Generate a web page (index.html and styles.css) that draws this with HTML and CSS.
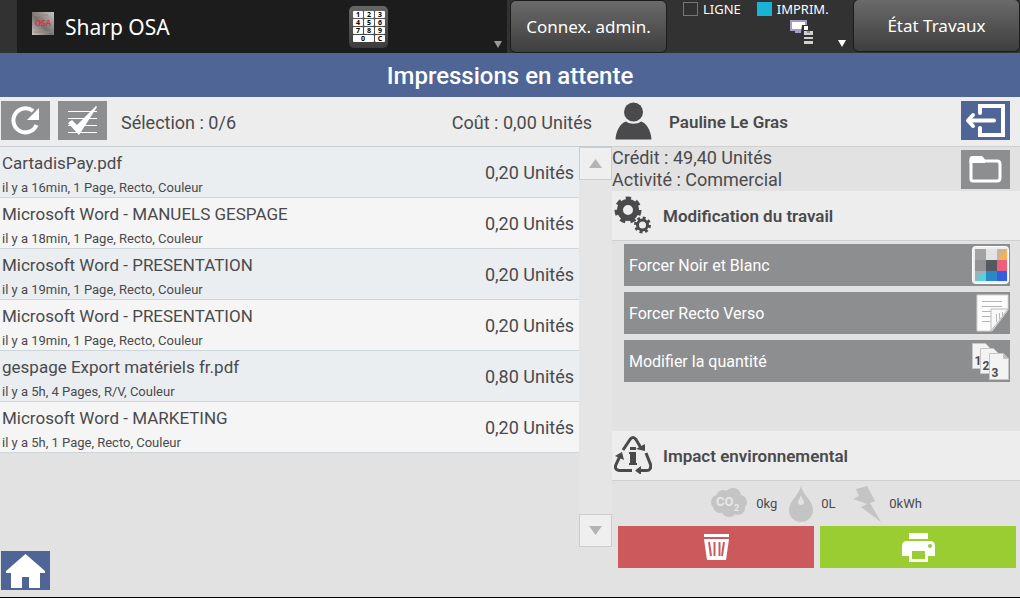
FILE: index.html
```html
<!DOCTYPE html>
<html lang="fr">
<head>
  <meta charset="UTF-8">
  <meta name="viewport" content="width=device-width, initial-scale=1">
  <title>Impressions en attente</title>
  <link rel="stylesheet" href="styles.css">
</head>
<body>

  <!-- BARRE SYSTEME -->
  <header class="system">
    <div class="app">
      <svg class="app-logo" width="22" height="23" viewBox="0 0 22 23" aria-hidden="true">
        <defs>
          <linearGradient id="metal" x1="0" y1="1" x2="1" y2="0">
            <stop offset="0" stop-color="#c8c4c0"/>
            <stop offset=".45" stop-color="#77716e"/>
            <stop offset="1" stop-color="#c9c5c2"/>
          </linearGradient>
        </defs>
        <rect width="22" height="23" fill="url(#metal)"/>
        <path d="M2 3h14M2 20h18" stroke="#8d8986"/>
        <text x="11" y="14" class="osa">OSA</text>
      </svg>
      <span class="app-name">Sharp OSA</span>
      <button class="keypad" aria-label="Clavier">
        <svg width="32" height="31" viewBox="0 0 32 31">
          <g fill="#fff">
            <rect x="0" y="0" width="10" height="7" rx="1"/><rect x="11" y="0" width="10" height="7" rx="1"/><rect x="22" y="0" width="10" height="7" rx="1"/>
            <rect x="0" y="8" width="10" height="7" rx="1"/><rect x="11" y="8" width="10" height="7" rx="1"/><rect x="22" y="8" width="10" height="7" rx="1"/>
            <rect x="0" y="16" width="10" height="7" rx="1"/><rect x="11" y="16" width="10" height="7" rx="1"/><rect x="22" y="16" width="10" height="7" rx="1"/>
            <rect x="0" y="24" width="21" height="7" rx="1"/><rect x="22" y="24" width="10" height="7" rx="1"/>
          </g>
          <g class="keys">
            <text x="5" y="6">1</text><text x="16" y="6">2</text><text x="27" y="6">3</text>
            <text x="5" y="14">4</text><text x="16" y="14">5</text><text x="27" y="14">6</text>
            <text x="5" y="22">7</text><text x="16" y="22">8</text><text x="27" y="22">9</text>
            <text x="10" y="30">0</text><text x="27" y="30">C</text>
          </g>
        </svg>
      </button>
      <svg class="caret" width="8" height="7" viewBox="0 0 8 7" aria-hidden="true"><path d="M0 0h8L4 7z" fill="#999"/></svg>
    </div>
    <button class="sys-btn admin">Connex. admin.</button>
    <div class="status">
      <div class="leds">
        <span class="led"></span><span>LIGNE</span>
        <span class="led on"></span><span>IMPRIM.</span>
      </div>
      <div class="status-icons">
        <svg width="24" height="24" viewBox="0 0 24 24" aria-hidden="true">
          <path d="M1 1h15v9H1z" fill="#fff" stroke="#a99bc9" stroke-width="2"/>
          <path d="M5 12h6" stroke="#a99bc9" stroke-width="2"/>
          <path d="M12 5h6l5 4v15h-10V12h-2z" fill="#333"/>
          <path d="M14 6h4v4h-4z" fill="#fff"/>
          <path d="M14 11h9v4h-9zM14 17h9v2h-9zM14 21h9v3h-9z" fill="#d0d0d0"/>
          <path d="M17 12h3" stroke="#555"/>
        </svg>
        <svg class="caret" width="8" height="7" viewBox="0 0 8 7" aria-hidden="true"><path d="M0 0h8L4 7z" fill="#fff"/></svg>
      </div>
    </div>
    <button class="sys-btn jobs-state">État Travaux</button>
  </header>

  <h1 class="title">Impressions en attente</h1>

  <main class="main">

    <!-- LISTE DES TRAVAUX -->
    <section class="left">
      <div class="toolbar">
        <button class="icon-btn grey" aria-label="Actualiser">
          <svg width="49" height="39" viewBox="0 0 49 39">
            <path d="M35.500 24A12 12 0 1 1 32 10" fill="none" stroke="#fff" stroke-width="4"/>
            <path d="M38 7v12H26z" fill="#fff"/>
          </svg>
        </button>
        <button class="icon-btn grey" aria-label="Tout sélectionner">
          <svg width="49" height="39" viewBox="0 0 49 39">
            <path d="M10 10.500h29M10 17.500h29M10 24.500h29M10 31.500h29" stroke="#fff"/>
            <path d="M10 22l4-3 5 5L38 5l1 1-18 28z" fill="#fff"/>
          </svg>
        </button>
        <span class="selection">Sélection : 0/6</span>
        <span class="cost">Coût : 0,00 Unités</span>
      </div>

      <div class="list-area">
        <ul class="jobs">
          <li><button class="job"><span class="doc"><span class="name">CartadisPay.pdf</span><span class="info">il y a 16min, 1 Page, Recto, Couleur</span></span><span class="price">0,20 Unités</span></button></li>
          <li><button class="job"><span class="doc"><span class="name">Microsoft Word - MANUELS GESPAGE</span><span class="info">il y a 18min, 1 Page, Recto, Couleur</span></span><span class="price">0,20 Unités</span></button></li>
          <li><button class="job"><span class="doc"><span class="name">Microsoft Word - PRESENTATION</span><span class="info">il y a 19min, 1 Page, Recto, Couleur</span></span><span class="price">0,20 Unités</span></button></li>
          <li><button class="job"><span class="doc"><span class="name">Microsoft Word - PRESENTATION</span><span class="info">il y a 19min, 1 Page, Recto, Couleur</span></span><span class="price">0,20 Unités</span></button></li>
          <li><button class="job"><span class="doc"><span class="name">gespage Export matériels fr.pdf</span><span class="info">il y a 5h, 4 Pages, R/V, Couleur</span></span><span class="price">0,80 Unités</span></button></li>
          <li><button class="job"><span class="doc"><span class="name">Microsoft Word - MARKETING</span><span class="info">il y a 5h, 1 Page, Recto, Couleur</span></span><span class="price">0,20 Unités</span></button></li>
        </ul>
        <div class="scroller">
          <button aria-label="Défiler vers le haut"><svg width="13" height="9" viewBox="0 0 13 9"><path d="M0 9h13L6.500 0z" fill="#b4b4b4"/></svg></button>
          <button aria-label="Défiler vers le bas"><svg width="13" height="9" viewBox="0 0 13 9"><path d="M0 0h13L6.500 9z" fill="#b4b4b4"/></svg></button>
        </div>
      </div>

      <div class="footer">
        <button class="icon-btn blue" aria-label="Accueil">
          <svg width="49" height="39" viewBox="0 0 49 39">
            <path d="M24.500 3L44 20v2h-5v15H28V26h-7v11H10V22H5v-2z" fill="#fff"/>
          </svg>
        </button>
      </div>
    </section>

    <!-- UTILISATEUR ET ACTIONS -->
    <section class="right">
      <div class="head user">
        <svg width="37" height="38" viewBox="0 0 37 38" aria-hidden="true">
          <circle cx="18.500" cy="10" r="9.500" fill="#4a4a4c"/>
          <path d="M0.500 37.500C1 28 6 21 11 19.500c4 3 11 3 15 0C31 21 36 28 36.500 37.500z" fill="#4a4a4c"/>
        </svg>
        <h2>Pauline Le Gras</h2>
        <button class="icon-btn blue" aria-label="Déconnexion">
          <svg width="49" height="39" viewBox="0 0 49 39" fill="none" stroke="#fff" stroke-width="4">
            <path d="M19 12V5h23v29H19v-7" stroke-linecap="round"/>
            <path d="M33 19.500H8" stroke-linecap="round"/>
            <path d="M12 14l-5 5.500 5 5.500" stroke-linecap="round" stroke-linejoin="round"/>
          </svg>
        </button>
      </div>

      <div class="account">
        <p>Crédit : 49,40 Unités<br>Activité : Commercial</p>
        <button class="icon-btn grey" aria-label="Changer d'activité">
          <svg width="49" height="39" viewBox="0 0 49 39">
            <path d="M10 29V11h26q3 0 3 3v14q0 3-3 3H12q-2 0-2-2z" fill="none" stroke="#fff" stroke-width="3"/>
            <path d="M8.500 13V9q0-3 3-3H20q2 0 4 4v3z" fill="#fff"/>
          </svg>
        </button>
      </div>

      <div class="head">
        <svg width="38" height="38" viewBox="0 0 38 38" aria-hidden="true" fill="none" stroke="#4a4a4c">
          <circle cx="14" cy="14" r="8" stroke-width="6"/>
          <circle cx="14" cy="14" r="11.500" stroke-width="4" stroke-dasharray="5.200 5.123"/>
          <circle cx="28.500" cy="29" r="5" stroke-width="3"/>
          <circle cx="28.500" cy="29" r="7" stroke-width="3" stroke-dasharray="2.800 2.698"/>
        </svg>
        <h2>Modification du travail</h2>
      </div>

      <div class="options">
        <button class="option">Forcer Noir et Blanc
          <svg width="39" height="40" viewBox="0 0 39 40">
            <rect x="1.500" y="1.500" width="36" height="37" rx="3" fill="#eee" stroke="#fff"/>
            <path d="M4 4h11v11H4z" fill="#a3a3a3"/><path d="M15 4h11v11H15z" fill="#e3e3e3"/><path d="M26 4h10v11H26z" fill="#d0b294"/><path d="M36 4v11h-9z" fill="#f0b552"/>
            <path d="M4 15h11v11H4z" fill="#929292"/><path d="M15 15h11v11H15z" fill="#555960"/><path d="M26 15h10v11H26z" fill="#ed5f7c"/>
            <path d="M4 26h11v10H4z" fill="#91b8bd"/><path d="M15 26v10H5z" fill="#57d0df"/><path d="M15 26h11v10H15z" fill="#2c89c5"/><path d="M26 26h10v10H26z" fill="#355fe0"/>
          </svg>
        </button>
        <button class="option">Forcer Recto Verso
          <svg width="39" height="40" viewBox="0 0 39 40">
            <path d="M6 2h31v15L21 38H6z" fill="#fcfcfc" stroke="#d6d6d6"/>
            <path d="M11 8.500h20M11 13.500h20M11 18.500h9M11 23.500h9M11 28.500h8" stroke="#b5b5b5"/>
            <path d="M20 38V16h17z" fill="#f8f8f8" stroke="#bbb"/>
            <path d="M25.500 21v8M28.500 20v6M31.500 19v4" stroke="#bbb"/>
          </svg>
        </button>
        <button class="option">Modifier la quantité
          <svg width="39" height="40" viewBox="0 0 39 40">
            <g fill="#f3f3f3" stroke="#c6c6c6">
              <path d="M1.500 2.500h13l5 5v20h-18z"/>
              <path d="M9.500 7.500h13l5 5v20h-18z"/>
              <path d="M18.500 12.500h14l5 5v21h-19z"/>
              <path d="M32.500 12.500v5h5" fill="#bbb"/>
            </g>
            <g class="pages"><text x="7" y="24">1</text><text x="15" y="29">2</text><text x="24" y="36">3</text></g>
          </svg>
        </button>
      </div>

      <div class="head">
        <svg width="38" height="38" viewBox="0 0 38 38" aria-hidden="true">
          <g fill="none" stroke="#4a4a4c" stroke-width="3">
            <path d="M9 14l7-10.500q3-4 6 0L27 12"/>
            <path d="M32 17l4.500 11.500q1 6-4 6H25"/>
            <path d="M18 34.500H5q-5-1-3-6L6 20"/>
          </g>
          <path d="M31 8v7l-9-2zM27 30v9l-6-4.500zM1 20l7-4 2 8z" fill="#4a4a4c"/>
          <path d="M16 11h6v3h-6zM15 16h7v11h1v2h-8v-2h1v-9h-1z" fill="#4a4a4c"/>
        </svg>
        <h2>Impact environnemental</h2>
      </div>

      <div class="impact">
        <svg width="38" height="36" viewBox="0 0 38 36" aria-hidden="true">
          <g fill="#c4c4c4"><circle cx="8" cy="16" r="7"/><circle cx="13" cy="11" r="7"/><circle cx="23" cy="10" r="8"/><circle cx="30" cy="16" r="7"/><circle cx="28" cy="22" r="7"/><circle cx="19" cy="23" r="8"/><circle cx="10" cy="20" r="7"/></g>
          <text x="6" y="20" class="co">CO</text><text x="24" y="25" class="co two">2</text>
        </svg>
        <span>0kg</span>
        <svg width="24" height="36" viewBox="0 0 24 36" aria-hidden="true">
          <path d="M12 0c2 9 12 15 12 24a12 12 0 0 1-24 0C0 15 10 9 12 0z" fill="#c4c4c4"/>
          <path d="M12 9c1 4 3 5 3 7a3 3 0 0 1-6 0c0-2 2-3 3-7z" fill="#e2e2e2"/>
        </svg>
        <span>0L</span>
        <svg width="28" height="36" viewBox="0 0 28 36" aria-hidden="true">
          <path d="M3 3l11-3 8 15-5 2 11 19L8 21l6-3L0 13l6-3z" fill="#c4c4c4"/>
        </svg>
        <span>0kWh</span>
      </div>

      <div class="actions">
        <button class="delete" aria-label="Supprimer">
          <svg width="25" height="27" viewBox="0 0 25 27">
            <path d="M0 0h25v3H0zM0 5h25l-3 21H3z" fill="#fff"/>
            <path d="M5 8l2 14M10.500 8v14M15.500 8v14M20 8l-2 14" stroke="#cc5a5c" stroke-width="2"/>
          </svg>
        </button>
        <button class="print" aria-label="Imprimer">
          <svg width="33" height="29" viewBox="0 0 33 29">
            <path d="M7 0h19v6H7z" fill="#fff"/>
            <path d="M5 8h23q5 0 5 5v10h-7v6H7v-6H0V13q0-5 5-5z" fill="#fff"/>
            <path d="M10 18h13v8H10z" fill="#9acd32"/>
            <circle cx="28" cy="13" r="2" fill="#9acd32"/>
          </svg>
        </button>
      </div>
    </section>

  </main>
</body>
</html>
```
FILE: styles.css
```css
* {
  box-sizing: border-box;
}
body {
  margin: 0;
  min-height: 100vh;
  display: flex;
  flex-direction: column;
  font-family: Roboto, "Noto Sans", sans-serif;
  font-size: 18px;
  color: #4a4a4c;
  background: #e2e2e2;
  border-bottom: 1px solid #000;
}
button {
  font: inherit;
  color: inherit;
  margin: 0;
  padding: 0;
  border: 0;
  cursor: pointer;
}
svg {
  display: block;
  flex: none;
}
h1, h2, p, ul {
  margin: 0;
  padding: 0;
}

/* barre systeme */
.system {
  display: flex;
  align-items: flex-start;
  height: 53px;
  font-family: "Noto Sans", "Open Sans", sans-serif;
  background: #323232;
  color: #fff;
}
.app {
  flex: 1;
  display: flex;
  align-items: center;
  height: 53px;
  margin-left: 17px;
  padding: 0 5px 0 15px;
  background: #1c1c1c;
}
.app-logo {
  margin-bottom: 7px;
}
.osa {
  font-size: 8px;
  font-weight: 600;
  fill: #d8333b;
  text-anchor: middle;
}
.app-name {
  flex: 1;
  padding-left: 11px;
  font-size: 21px;
}
.keypad {
  display: flex;
  justify-content: center;
  align-items: center;
  width: 39px;
  height: 42px;
  margin-right: 106px;
  border-radius: 5px;
  background: linear-gradient(#666, #3c3c3c);
}
.keys {
  font-size: 7px;
  font-weight: 700;
  text-anchor: middle;
}
.caret {
  align-self: flex-end;
  margin-bottom: 5px;
}
.sys-btn {
  height: 51px;
  border-radius: 5px;
  font-size: 17px;
  background: linear-gradient(#6a6a6a, #3e3e3e);
  box-shadow: 0 0 0 1px #1c1c1c;
}
.admin {
  width: 155px;
  margin: 1px 0 0 4px;
}
.jobs-state {
  width: 165px;
  margin-right: 1px;
}
.status {
  width: 188px;
  padding: 0 8px 0 17px;
  font-size: 13px;
}
.leds {
  display: flex;
  align-items: center;
  gap: 5px;
  height: 18px;
}
.led {
  width: 15px;
  height: 14px;
  border: 1px solid #777;
}
.led.on {
  margin-left: 11px;
  border: 0;
  background: #18b4d8;
}
.status-icons {
  display: flex;
  justify-content: flex-end;
  gap: 24px;
  height: 34px;
  padding-top: 2px;
}

.title {
  height: 44px;
  padding-top: 2px;
  line-height: 42px;
  font-size: 24px;
  font-weight: 500;
  text-align: center;
  color: #fff;
  background: #4f6595;
}

.main {
  flex: 1;
  display: grid;
  grid-template-columns: 3fr 2fr;
}
.left, .right {
  display: flex;
  flex-direction: column;
  min-width: 0;
}
.icon-btn {
  width: 49px;
  height: 39px;
  flex: none;
}
.grey {
  background: #8d8e90;
}
.blue {
  background: #4f6595;
}

/* travaux */
.toolbar {
  display: flex;
  align-items: center;
  gap: 8px;
  height: 50px;
  padding: 0 20px 2px 1px;
  border-bottom: 1px solid #c5cdd3;
  background: #ededed;
}
.selection, .cost {
  padding-top: 3px;
}
.selection {
  flex: 1;
  padding-left: 6px;
}
.list-area {
  flex: 1;
  display: flex;
}
.jobs {
  flex: 1;
  list-style: none;
}
.job {
  display: flex;
  align-items: center;
  width: 100%;
  height: 51px;
  padding: 0 5px 0 2px;
  text-align: left;
  border-bottom: 1px solid #cfd6da;
  background: #f5f5f5;
}
.jobs li:nth-child(odd) .job {
  background: #eaeef1;
}
.doc {
  flex: 1;
  padding-top: 3px;
}
.name, .info {
  display: block;
}
.name {
  font-size: 17px;
  line-height: 28px;
}
.info {
  font-size: 13px;
  line-height: 22px;
}
.scroller {
  display: flex;
  flex-direction: column;
  justify-content: space-between;
  width: 33px;
  background: #e5e5e5;
}
.scroller button {
  display: flex;
  justify-content: center;
  align-items: center;
  height: 33px;
  border: 1px solid #cdcdcd;
  background: #efefef;
}
.footer {
  display: flex;
  padding: 4px 1px 7px;
}

/* panneau de droite */
.head {
  display: flex;
  align-items: center;
  gap: 11px;
  height: 50px;
  padding: 0 10px 2px 2px;
  border-bottom: 1px solid #cfcfcf;
  background: #ededed;
}
.head h2 {
  flex: 1;
  padding-top: 3px;
  font-size: 17px;
  font-weight: 600;
}
.user {
  gap: 17px;
  padding-left: 3px;
}
.account {
  display: flex;
  justify-content: space-between;
  align-items: center;
  height: 44px;
  padding-right: 10px;
  line-height: 22px;
}
.options {
  flex: 1;
  display: flex;
  flex-direction: column;
  gap: 6px;
  padding: 3px 10px 0 12px;
}
.option {
  display: flex;
  justify-content: space-between;
  align-items: center;
  height: 42px;
  padding-left: 5px;
  font-size: 16px;
  color: #fff;
  background: #8d8e90;
}
.pages {
  font-size: 12px;
  font-weight: 700;
  text-anchor: middle;
  fill: #4a4a4c;
}
.impact {
  display: flex;
  justify-content: center;
  align-items: center;
  gap: 8px;
  height: 45px;
  font-size: 13px;
}
.impact span + svg {
  margin-left: 4px;
}
.impact svg + span {
  min-width: 20px;
}
.co {
  font-size: 13px;
  font-weight: 700;
  fill: #e8e8e8;
}
.two {
  font-size: 9px;
}
.actions {
  display: grid;
  grid-template-columns: 1fr 1fr;
  gap: 6px;
  padding: 0 4px 29px 6px;
}
.actions button {
  display: flex;
  justify-content: center;
  align-items: center;
  height: 42px;
}
.delete {
  background: #cc5a5c;
}
.print {
  background: #9acd32;
}
```
